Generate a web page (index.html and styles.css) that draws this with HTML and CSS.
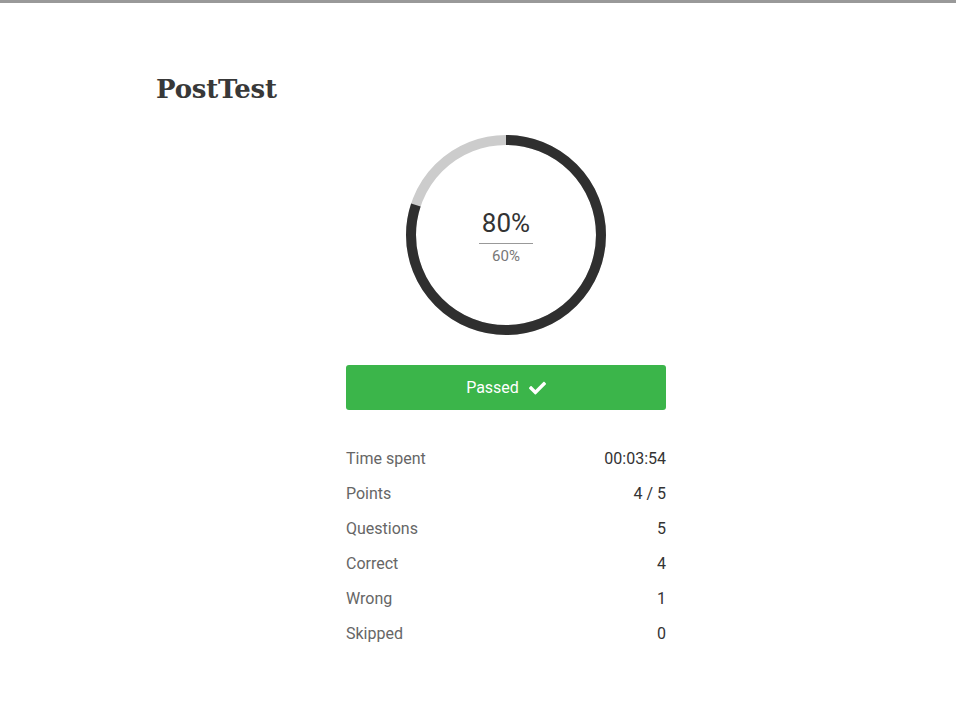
FILE: index.html
```html
<!DOCTYPE html>
<html>
<head>
<meta charset="utf-8">
<link rel="stylesheet" href="styles.css">
</head>
<body>
<div class="page">
  <h1 class="title">PostTest</h1>
  <div class="result">
    <div class="ring">
      <svg class="ring-svg" width="200" height="200" viewBox="0 0 200 200">
        <circle cx="100" cy="100" r="95" fill="none" stroke="#cccccc" stroke-width="10"/>
        <circle cx="100" cy="100" r="95" fill="none" stroke="#2f2f2f" stroke-width="10" stroke-dasharray="477.52 596.9" transform="rotate(-90 100 100)"/>
      </svg>
      <div class="ring-text">
        <div class="score">80%</div>
        <div class="pass-mark">60%</div>
      </div>
    </div>
    <div class="status">
      <span>Passed</span>
      <svg class="check" width="17" height="14" viewBox="0 0 512 420"><path fill="#fff" d="M173.9 399.4l-166.4-166.4c-10-10-10-26.2 0-36.2l36.2-36.2c10-10 26.2-10 36.2 0L192 272.7 432.1 32.6c10-10 26.2-10 36.2 0l36.2 36.2c10 10 10 26.2 0 36.2l-294.4 294.4c-10 10-26.2 10-36.2 0z"/></svg>
    </div>
    <div class="stats">
      <div class="row"><span class="label">Time spent</span><span class="value">00:03:54</span></div>
      <div class="row"><span class="label">Points</span><span class="value">4 / 5</span></div>
      <div class="row"><span class="label">Questions</span><span class="value">5</span></div>
      <div class="row"><span class="label">Correct</span><span class="value">4</span></div>
      <div class="row"><span class="label">Wrong</span><span class="value">1</span></div>
      <div class="row"><span class="label">Skipped</span><span class="value">0</span></div>
    </div>
  </div>
</div>
</body>
</html>
```
FILE: styles.css
```css
html, body {
  margin: 0;
  padding: 0;
  background: #fff;
}
body {
  border-top: 3px solid #999;
  font-family: Roboto, "Liberation Sans", sans-serif;
  color: #333;
}
.page {
  width: 700px;
  margin-left: 156px;
  padding-top: 66px;
}
.title {
  margin: 0;
  font-family: "DejaVu Serif", serif;
  font-weight: 700;
  font-size: 26px;
  line-height: 40px;
  letter-spacing: -0.2px;
  color: #383838;
}
.result {
  display: flex;
  flex-direction: column;
  align-items: center;
  padding-top: 26px;
}
.ring {
  position: relative;
  width: 200px;
  height: 200px;
}
.ring-svg {
  display: block;
}
.ring-text {
  position: absolute;
  inset: 0;
  display: flex;
  flex-direction: column;
  align-items: center;
  justify-content: center;
}
.score {
  font-size: 26px;
  line-height: 30px;
  color: #333;
  padding: 0 1px 5px;
  border-bottom: 1px solid #999;
  width: 52px;
  text-align: center;
  margin-top: 4px;
}
.pass-mark {
  font-size: 15px;
  line-height: 20px;
  color: #777;
  margin-top: 2px;
}
.status {
  margin-top: 30px;
  width: 320px;
  height: 45px;
  background: #3bb54a;
  border-radius: 3px;
  display: flex;
  align-items: center;
  justify-content: center;
  gap: 10px;
  color: #fff;
  font-size: 16px;
  font-weight: 400;
}
.check {
  display: block;
}
.stats {
  margin-top: 31px;
  width: 320px;
}
.row {
  display: flex;
  justify-content: space-between;
  align-items: center;
  height: 35px;
  font-size: 16px;
}
.label {
  color: #666;
}
.value {
  color: #333;
}
```
